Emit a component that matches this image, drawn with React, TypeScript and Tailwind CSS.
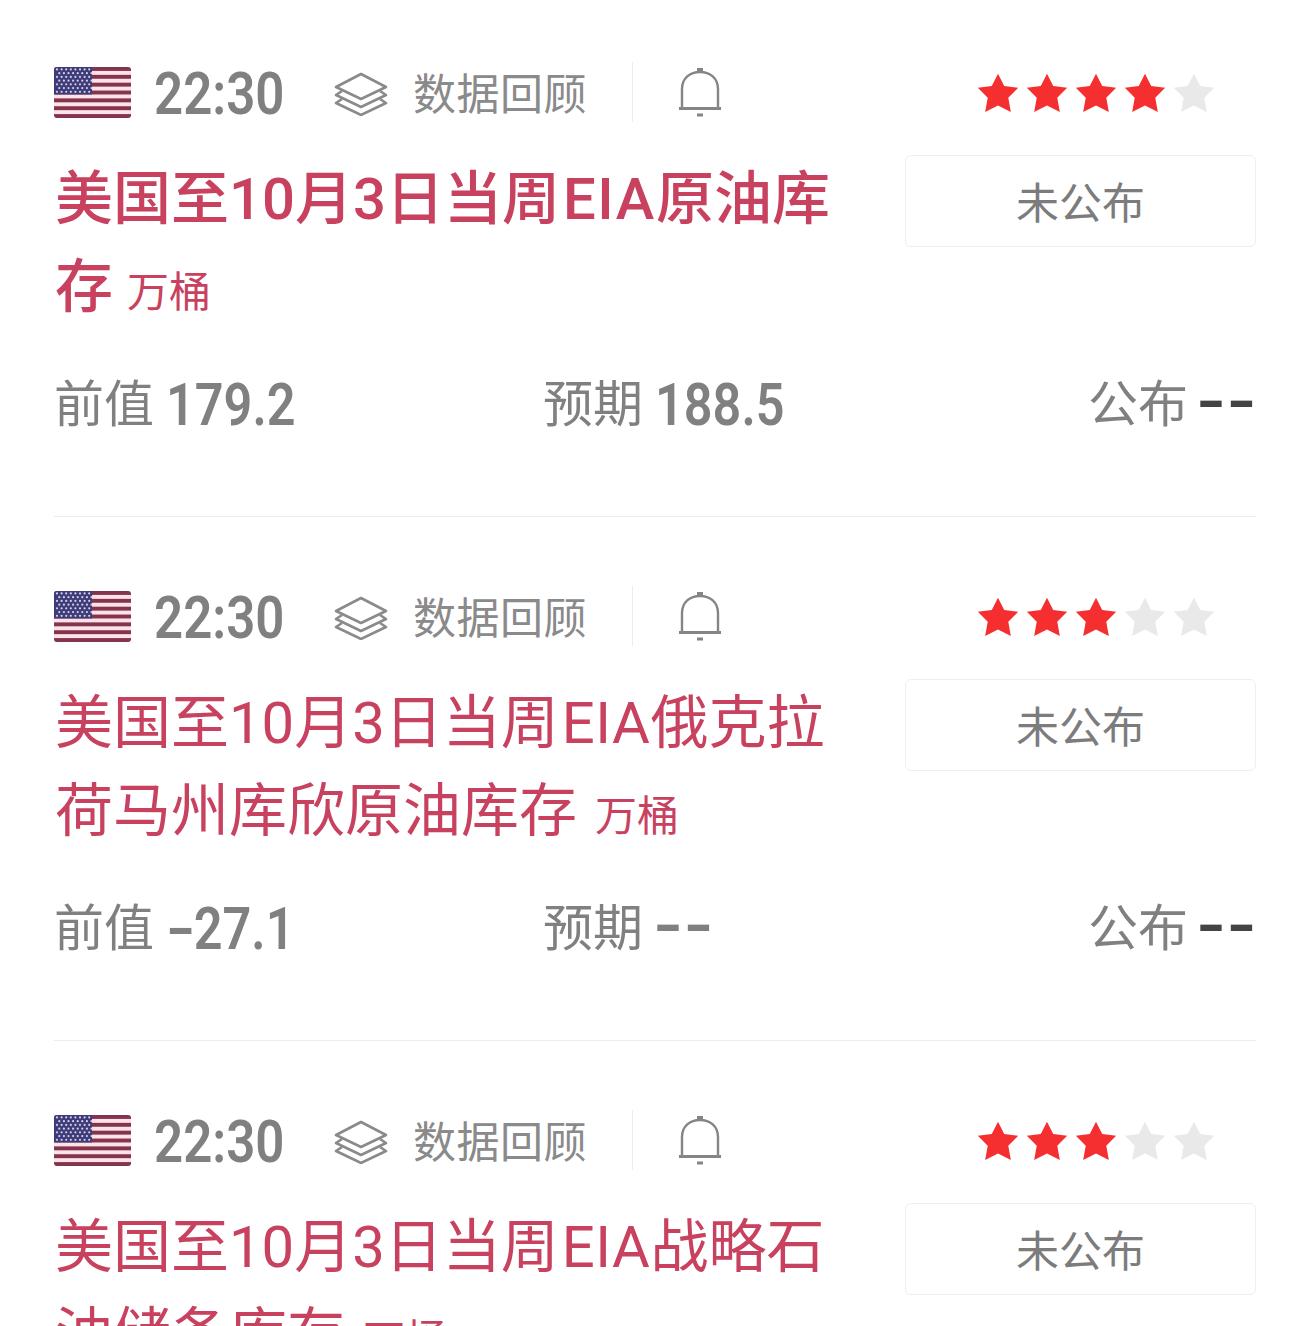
const font = "font-['Roboto','Noto_Sans_CJK_SC',sans-serif]";

const items = [
  { rest: '原油库', line2: '存', stars: 4, prev: '179.2', expect: '188.5', title: 'font-medium', eia: 'ml-[3px] tracking-[1.6px]', unit: 'ml-[14px]' },
  { rest: '俄克拉', line2: '荷马州库欣原油库存', stars: 3, prev: '-27.1', expect: '--', title: '', eia: 'ml-[3px] tracking-[.5px]', unit: 'ml-[18px]' },
  { rest: '战略石', line2: '油储备库存', stars: 3, prev: '', expect: '', title: '', eia: 'ml-[3px] tracking-[.5px]', unit: 'ml-[18px]' },
];

function Flag() {
  const stripes = [0, 1, 2, 3, 4, 5, 6, 7, 8, 9, 10, 11, 12];
  const rows = [0, 1, 2, 3, 4, 5, 6];
  const cols = [0, 1, 2, 3, 4, 5, 6, 7];
  return (
    <svg width="77" height="51" viewBox="0 0 77 52" preserveAspectRatio="none" className="shrink-0 rounded-[3px]">
      <rect width="77" height="52" fill="#fde3e6" />
      {stripes.filter((s) => s % 2 === 0).map((s) => (
        <rect key={s} y={s * 4} width="77" height="4" fill="#84344f" />
      ))}
      <rect width="38" height="28" fill="#3e3b78" />
      {rows.map((r) =>
        cols.map((c) => (
          <circle key={`${r}-${c}`} cx={3 + c * 4.6 + (r % 2) * 2.3} cy={2.5 + r * 3.8} r="1.1" fill="#cfcfe8" />
        )),
      )}
    </svg>
  );
}

function Layers() {
  return (
    <svg width="54" height="44" viewBox="0 0 54 44" fill="none" stroke="#8a8a8a" strokeWidth="2.6" className="mt-[3px] shrink-0">
      <path d="M27 2 L52 15 L27 27 L2 15 Z" strokeLinejoin="round" />
      <path d="M8 19 L2 23 L27 35 L52 23 L46 19" strokeLinejoin="round" />
      <path d="M8 27 L2 31 L27 43 L52 31 L46 27" strokeLinejoin="round" />
    </svg>
  );
}

function Bell() {
  return (
    <svg width="44" height="50" viewBox="0 0 44 50" fill="none" stroke="#858585" strokeWidth="2.4" className="shrink-0">
      <path d="M4 41 V22 C4 11 12 5 22 5 C32 5 40 11 40 22 V41" />
      <path d="M1 41.5 H43" strokeWidth="3" />
      <path d="M19 3 H25" strokeWidth="4" />
      <path d="M19 48 H25" strokeWidth="3" />
    </svg>
  );
}

function Star({ on }: { on: boolean }) {
  return (
    <svg width="44" height="44" viewBox="0 0 24 24" fill={on ? '#f52f2f' : '#e9e9e9'}>
      <path d="M12 1.5 L15.4 8.2 L23 9.2 L17.6 14.6 L19 22.4 L12 18.8 L5 22.4 L6.4 14.6 L1 9.2 L8.6 8.2 Z" />
    </svg>
  );
}

function Digits({ children }: { children: string }) {
  const minus = children.startsWith('-');
  return (
    <span className="inline-block w-[170px] origin-left scale-x-[.84] text-[60px] leading-none font-semibold whitespace-nowrap text-[#808080]">
      {minus && <span className="mr-[11px] inline-block origin-left scale-x-[1.6]">-</span>}
      {minus ? children.slice(1) : children}
    </span>
  );
}

function Dashes({ dark }: { dark?: boolean }) {
  return (
    <span className={`inline-block w-[60px] origin-left scale-x-[1.33] pb-2 text-[58px] leading-none font-bold ${dark ? 'text-[#444444]' : 'text-[#808080]'}`}>
      --
    </span>
  );
}

export default function App() {
  return (
    <div className={`h-[1326px] overflow-hidden bg-white pl-[54px] pr-[59px] ${font}`}>
      {items.map((item, i) => (
        <div key={i} className={`border-b border-[#ececec] pb-[81px] ${i === 0 ? 'pt-[62px]' : 'pt-[69px]'}`}>
          <div className="flex h-[60px] items-center">
            <Flag />
            <span className="ml-[23px] inline-block w-[151px] origin-left scale-x-[.85] pt-1 text-[60px] leading-none font-semibold text-[#808080]">22:30</span>
            <div className="ml-[29px] flex w-[298px] items-center">
              <Layers />
              <span className="ml-[25px] pt-[6px] text-[43px] leading-none tracking-[.5px] text-[#8a8a8a]">数据回顾</span>
            </div>
            <div className="h-[60px] border-l border-[#ececec]" />
            <div className="ml-[45px]"><Bell /></div>
            <div className="mt-[2px] ml-auto flex w-[280px] gap-[5px]">
              {[0, 1, 2, 3, 4].map((n) => (
                <Star key={n} on={n < item.stars} />
              ))}
            </div>
          </div>
          <div className="mt-[33px] flex h-[176px] items-start justify-between">
            <div className={`ml-px h-[176px] w-[800px] text-[58px] leading-[88px] text-[#c8415f] ${item.title}`}>
              美国至10月3日当周<span className={item.eia}>EIA</span>{item.rest}
              <br />
              {item.line2}
              <span className={`text-[42px] font-normal ${item.unit}`}>万桶</span>
            </div>
            <div className="flex h-[92px] w-[351px] items-center justify-center rounded-md border border-[#efefef] pt-[6px] text-[43px] text-[#7c7c7c]">
              未公布
            </div>
          </div>
          <div className="mt-[44px] grid h-[60px] grid-cols-[489px_1fr_auto] grid-rows-[60px] items-center text-[50px] leading-none text-[#808080]">
            <div className="flex items-center gap-[12px]">
              <span>前值</span>
              <Digits>{item.prev}</Digits>
            </div>
            <div className="flex items-center gap-[10px]">
              <span>预期</span>
              {item.expect === '--' ? <Dashes /> : <span className="pl-[2px]"><Digits>{item.expect}</Digits></span>}
            </div>
            <div className="flex items-center gap-[8px]">
              <span>公布</span>
              <Dashes dark />
            </div>
          </div>
        </div>
      ))}
    </div>
  );
}
